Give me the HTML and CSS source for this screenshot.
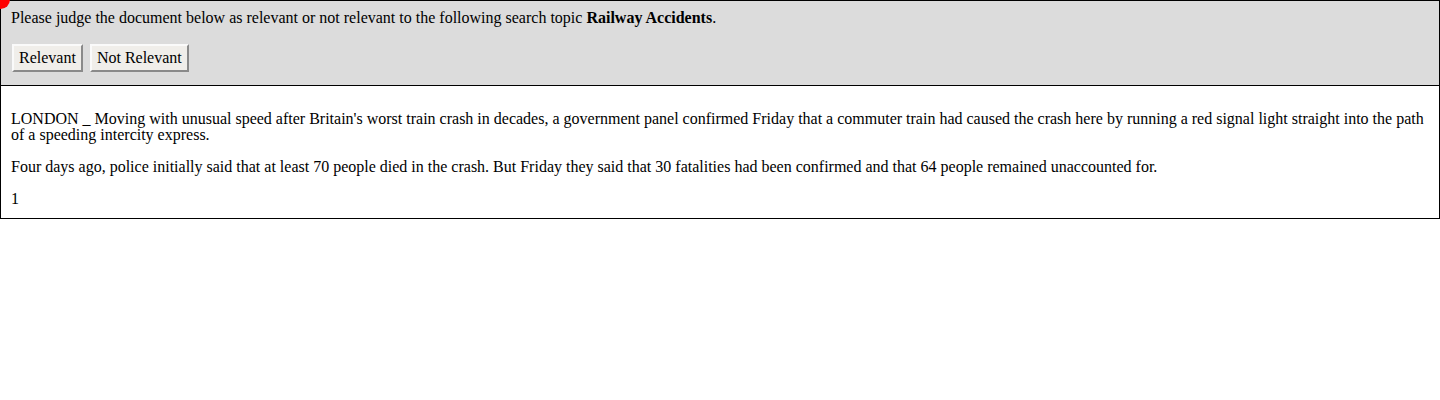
FILE: index.html
```html
<!DOCTYPE html>
<html>
<head>
<meta charset="utf-8">
<link rel="stylesheet" href="styles.css">
</head>
<body>
<div class="dot"></div>
<div class="judge">
  <p class="prompt">Please judge the document below as relevant or not relevant to the following search topic <b>Railway Accidents</b>.</p>
  <div class="buttons">
    <button class="btn">Relevant</button>
    <button class="btn">Not Relevant</button>
  </div>
</div>
<div class="doc">
  <p>LONDON _ Moving with unusual speed after Britain's worst train crash in decades, a government panel confirmed Friday that a commuter train had caused the crash here by running a red signal light straight into the path of a speeding intercity express.</p>
  <p>Four days ago, police initially said that at least 70 people died in the crash. But Friday they said that 30 fatalities had been confirmed and that 64 people remained unaccounted for.</p>
  <p>1</p>
</div>
</body>
</html>
```

FILE: styles.css
```css
html, body {
  margin: 0;
  padding: 0;
  background: #fff;
}
body {
  font-family: "Liberation Serif", "Times New Roman", serif;
  font-size: 16px;
  line-height: 16px;
  color: #000;
  position: relative;
}
.dot {
  position: absolute;
  left: -9px;
  top: -10px;
  width: 19px;
  height: 19px;
  border-radius: 50%;
  background: #f00;
}
.judge {
  background: #dcdcdc;
  border: 1px solid #000;
  padding: 9px 10px 13px;
}
.prompt {
  margin: 0;
}
.buttons {
  display: flex;
  gap: 6px;
  margin-top: 18px;
}
.btn {
  font-family: "Liberation Serif", "Times New Roman", serif;
  font-size: 16px;
  line-height: 18px;
  height: 28px;
  padding: 3px 5px;
  background: #f0eeea;
  border: 2px solid;
  border-color: #fafafa #8a8a8a #8a8a8a #fafafa;
  color: #000;
  margin: 0;
  margin-left: 1px;
}
.doc {
  border: 1px solid #000;
  border-top: none;
  padding: 25px 10px 11px;
}
.doc p {
  margin: 0 0 16px;
}
.doc p:last-child {
  margin-bottom: 0;
}
```
